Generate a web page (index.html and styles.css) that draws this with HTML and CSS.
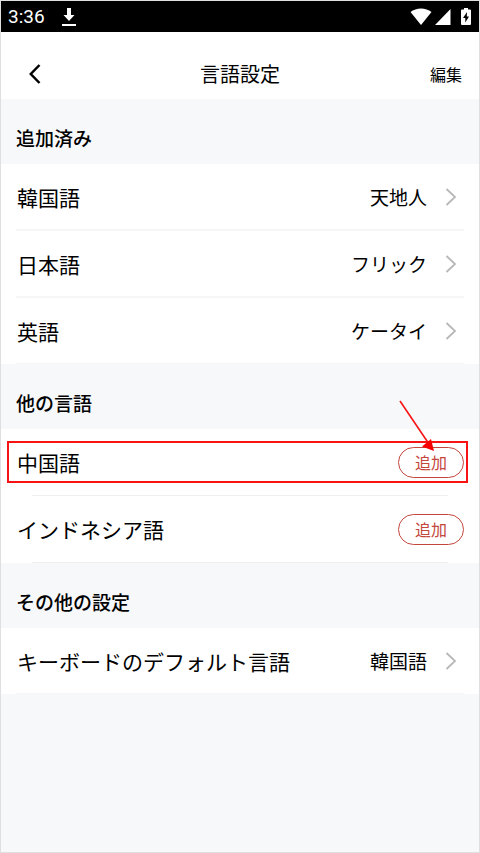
FILE: index.html
```html
<!DOCTYPE html>
<html lang="ja">
<head>
<meta charset="utf-8">
<meta name="viewport" content="width=device-width, initial-scale=1">
<title>言語設定</title>
<link rel="stylesheet" href="styles.css">
</head>
<body>
<div class="screen">
  <div class="status">
    <span class="clock">3:36</span>
    <svg class="download" width="14" height="18" viewBox="0 0 14 18" aria-hidden="true"><path d="M5 0h4v7h3.500L7 13 1.500 7H5zM0 16h14v2H0z"/></svg>
    <div class="status-icons">
      <svg width="22" height="18" viewBox="0 0 22 18" aria-hidden="true"><path d="M.5 4Q5 .5 11 .5T21.500 4L11 17z"/></svg>
      <svg width="16" height="18" viewBox="0 0 16 18" aria-hidden="true"><path d="M0 17 15.500 1v16z"/></svg>
      <svg class="battery" width="10" height="18" viewBox="0 0 10 18" aria-hidden="true"><path d="M3 0h4v1.500h2q1 0 1 1V16q0 1-1 1H1q-1 0-1-1V2.500q0-1 1-1h2z"/><path class="bolt" d="M6 4 2 10h2.300v4.500L8 8.500H5.800z"/></svg>
    </div>
  </div>
  <header class="bar">
    <button class="back" type="button" aria-label="戻る">
      <svg width="12" height="20" viewBox="0 0 12 20" aria-hidden="true"><path d="M10.500 1 1.800 10l8.700 9"/></svg>
    </button>
    <h1>言語設定</h1>
    <button class="edit" type="button">編集</button>
  </header>
  <main>
    <section>
      <h2>追加済み</h2>
      <ul class="list">
        <li><a class="row" href="#korean"><span class="name">韓国語</span><span class="value">天地人</span><svg class="chevron" width="12" height="18" viewBox="0 0 12 18" aria-hidden="true"><path d="M1.500 1 10 9l-8.500 8"/></svg></a></li>
        <li><a class="row" href="#japanese"><span class="name">日本語</span><span class="value">フリック</span><svg class="chevron" width="12" height="18" viewBox="0 0 12 18" aria-hidden="true"><path d="M1.500 1 10 9l-8.500 8"/></svg></a></li>
        <li><a class="row" href="#english"><span class="name">英語</span><span class="value">ケータイ</span><svg class="chevron" width="12" height="18" viewBox="0 0 12 18" aria-hidden="true"><path d="M1.500 1 10 9l-8.500 8"/></svg></a></li>
      </ul>
    </section>
    <section>
      <h2>他の言語</h2>
      <ul class="list inset">
        <li>
          <div class="row"><span class="name">中国語</span><button class="add" type="button">追加</button></div>
          <div class="highlight" aria-hidden="true"></div>
          <svg class="arrow" width="40" height="56" viewBox="0 0 40 56" aria-hidden="true"><path class="shaft" d="M2 3l29 43"/><path class="head" d="M36 53 24 48.500 33 41z"/></svg>
        </li>
        <li><div class="row"><span class="name">インドネシア語</span><button class="add" type="button">追加</button></div></li>
      </ul>
    </section>
    <section>
      <h2>その他の設定</h2>
      <ul class="list">
        <li><a class="row" href="#default"><span class="name">キーボードのデフォルト言語</span><span class="value">韓国語</span><svg class="chevron" width="12" height="18" viewBox="0 0 12 18" aria-hidden="true"><path d="M1.500 1 10 9l-8.500 8"/></svg></a></li>
      </ul>
    </section>
  </main>
</div>
</body>
</html>
```
FILE: styles.css
```css
* { box-sizing: border-box; }

body {
  margin: 0;
  background: #f7f8fa;
  color: #000;
  font-family: "Noto Sans CJK JP", sans-serif;
}

button {
  padding: 0;
  border: 0;
  background: none;
  color: inherit;
  font: inherit;
}

svg { display: block; flex: none; }

.screen {
  min-height: 100vh;
  border: 1px solid #dfdfe2;
}

.status {
  display: flex;
  align-items: center;
  height: 31px;
  padding: 0 8px 0 7px;
  background: #000;
  color: #fff;
  font: 400 19px/24px Roboto, sans-serif;
}

.status svg { fill: #fff; }
.download { margin-left: 17px; }
.status-icons { display: flex; gap: 3px; margin-left: auto; }
.battery { margin-left: 7px; }
.status .bolt { fill: #000; }

.bar {
  display: grid;
  grid-template-columns: 1fr auto 1fr;
  align-items: center;
  height: 67px;
  padding: 16px 17px 0;
  background: #fff;
}

.back {
  display: flex;
  align-items: center;
  justify-content: center;
  width: 34px;
  height: 36px;
}

.back path {
  fill: none;
  stroke: #000;
  stroke-width: 2.500;
}

.bar h1 {
  margin: 0;
  font-size: 20px;
  font-weight: 400;
  line-height: 32px;
}

.edit {
  justify-self: end;
  font-size: 16px;
  line-height: 30px;
}

h2 {
  margin: 0;
  padding: 25px 15px 12px;
  font-size: 19px;
  font-weight: 500;
  line-height: 28px;
}

.list {
  display: grid;
  gap: 1px;
  margin: 0;
  padding: 0;
  background: #fff;
  list-style: none;
}

.list li { position: relative; }

.list li::after {
  content: "";
  position: absolute;
  right: 15px;
  bottom: -1px;
  left: 15px;
  height: 2px;
  background: #f6f6f7;
}

.inset { padding-bottom: 1px; }

.inset li::after {
  right: 31px;
  left: 31px;
  height: 1px;
  background: #efeff0;
}

.list:not(.inset) li:last-child::after {
  bottom: 0;
  height: 1px;
}

.row {
  display: flex;
  align-items: center;
  height: 66px;
  padding: 0 15px 0 16px;
  color: inherit;
  text-decoration: none;
}

.name {
  flex: 1;
  font-size: 21px;
  line-height: 32px;
}

.value {
  font-size: 19px;
  line-height: 32px;
}

.chevron { margin: 0 7px 0 18px; }

.chevron path {
  fill: none;
  stroke: #b8b8b8;
  stroke-width: 1.800;
}

.add {
  width: 66px;
  height: 31px;
  border: 1px solid #c4473d;
  border-radius: 16px;
  color: #c4473d;
  font-size: 16px;
  font-weight: 400;
  line-height: 28px;
}

.highlight {
  position: absolute;
  top: 12px;
  right: 11px;
  left: 6px;
  height: 42px;
  border: 2px solid #f81414;
  pointer-events: none;
}

.arrow {
  position: absolute;
  top: -31px;
  right: 41px;
  pointer-events: none;
}

.shaft {
  fill: none;
  stroke: #f81414;
  stroke-width: 1.600;
}

.head { fill: #f80000; }
```
